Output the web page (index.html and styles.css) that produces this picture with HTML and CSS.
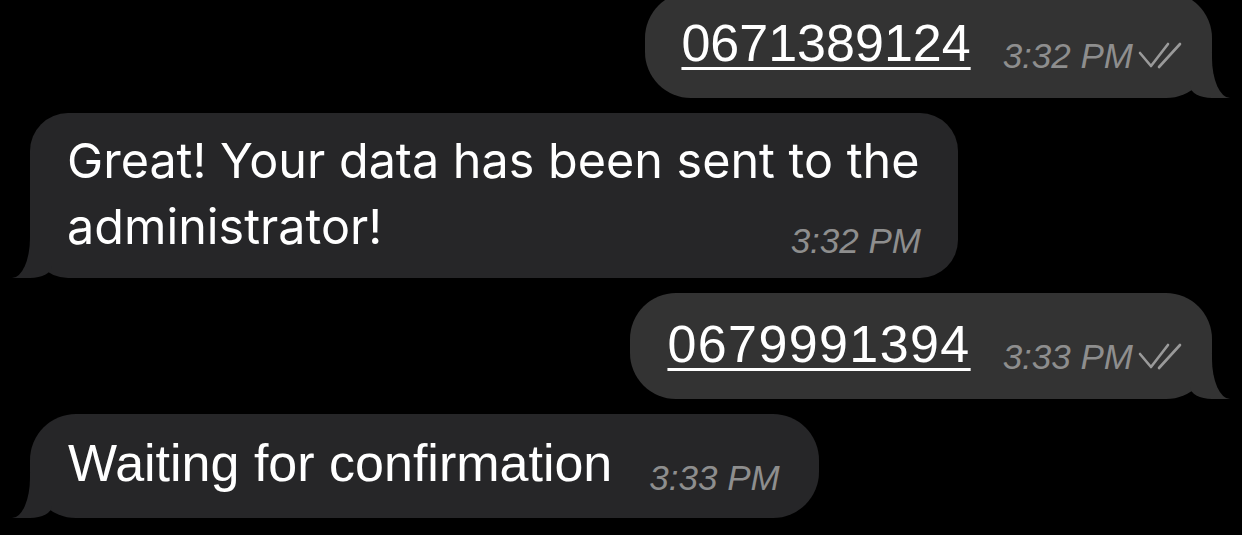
FILE: index.html
```html
<!DOCTYPE html>
<html lang="en">
<head>
<meta charset="utf-8">
<title>Chat</title>
<link rel="stylesheet" href="styles.css">
</head>
<body>
<div class="chat">
  <div class="bubble out first">
    <a class="phone" href="#">0671389124</a>
    <span class="meta">3:32 PM
      <svg class="ticks" width="44" height="28" viewBox="0 0 44 28"><path d="M2 11 L13 24 L30 2 M21 25 L42 2" fill="none" stroke="currentColor" stroke-width="2.6" stroke-linecap="round" stroke-linejoin="round"/></svg>
    </span>
  </div>
  <div class="bubble in multi">
    <p class="text sf">Great! Your data has been sent to the administrator!</p>
    <span class="meta stacked">3:32 PM</span>
  </div>
  <div class="bubble out">
    <a class="phone wide" href="#">0679991394</a>
    <span class="meta">3:33 PM
      <svg class="ticks" width="44" height="28" viewBox="0 0 44 28"><path d="M2 11 L13 24 L30 2 M21 25 L42 2" fill="none" stroke="currentColor" stroke-width="2.6" stroke-linecap="round" stroke-linejoin="round"/></svg>
    </span>
  </div>
  <div class="bubble in last">
    <p class="text">Waiting for confirmation</p>
    <span class="meta">3:33 PM</span>
  </div>
</div>
</body>
</html>
```

FILE: styles.css
```css
html, body {
  margin: 0;
  padding: 0;
  background: #000;
  height: 100%;
  overflow: hidden;
}

.chat {
  display: flex;
  flex-direction: column;
  gap: 15px;
  padding: 0 30px;
  font-family: "Liberation Sans", Arial, sans-serif;
  color: #fff;
}

.bubble {
  position: relative;
  display: flex;
  align-items: flex-end;
  border-radius: 46px;
  box-sizing: border-box;
}

.bubble.out {
  align-self: flex-end;
  background: #333333;
  padding: 21px 30px 25px 37px;
}

.bubble.first {
  margin-top: -8px;
  padding-left: 36px;
}

.bubble.in {
  align-self: flex-start;
  background: #262628;
  padding: 21px 39px 25px 38px;
}

.bubble.last {
  padding-top: 19px;
  padding-bottom: 25px;
}

.bubble.multi {
  flex-direction: column;
  align-items: stretch;
  width: 928px;
  border-radius: 38px;
  padding: 15px 37px 17px 37px;
}

/* tails */
.bubble::before,
.bubble::after {
  content: "";
  position: absolute;
  bottom: 0;
  height: 45px;
}

.bubble.out::before {
  right: -18px;
  width: 40px;
  background: #333333;
  border-bottom-left-radius: 22px 12px;
}

.bubble.out::after {
  right: -40px;
  width: 40px;
  background: #000;
  border-bottom-left-radius: 18px 40px;
}

.bubble.in::before {
  left: -18px;
  width: 40px;
  background: #262628;
  border-bottom-right-radius: 22px 12px;
}

.bubble.in::after {
  left: -40px;
  width: 40px;
  background: #000;
  border-bottom-right-radius: 18px 40px;
}

.phone {
  color: #fff;
  font-size: 52px;
  line-height: 60px;
  text-decoration: underline;
  text-decoration-thickness: 3px;
  text-underline-offset: 6px;
  position: relative;
  z-index: 1;
}

.phone.wide {
  letter-spacing: 1.4px;
}

.text {
  margin: 0;
  font-size: 52px;
  line-height: 60px;
  position: relative;
  z-index: 1;
}

.text.sf {
  font-family: Inter, "Noto Sans", sans-serif;
  font-size: 48.5px;
  line-height: 66px;
}

.meta {
  display: inline-flex;
  align-items: baseline;
  gap: 5px;
  margin-left: 32px;
  margin-bottom: -3px;
  font-size: 35px;
  line-height: 40px;
  font-style: italic;
  color: #8e8e8e;
  white-space: nowrap;
  position: relative;
  z-index: 1;
}

.bubble.last .meta {
  margin-left: 37px;
  margin-bottom: -5px;
}

.meta.stacked {
  align-self: flex-end;
  margin: -39px 0 0 0;
}

.ticks {
  color: #9a9a9a;
  position: relative;
  top: 2px;
}
```
